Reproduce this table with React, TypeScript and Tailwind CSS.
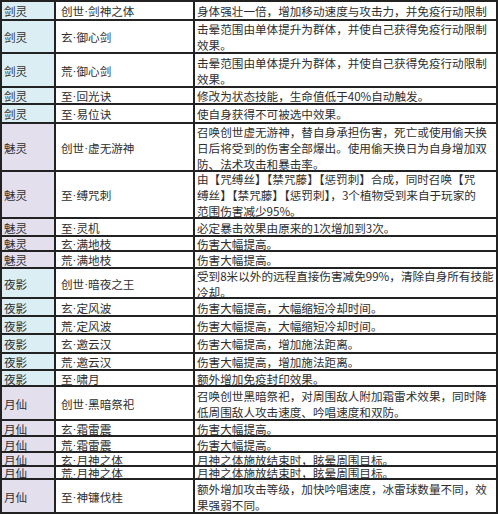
type Row = {
  role: string;
  skill: string;
  lines: string[];
  h: string;
};

const rows: Row[] = [
  { role: "剑灵", skill: "创世·剑神之体", lines: ["身体强壮一倍，增加移动速度与攻击力，并免疫行动限制"], h: "h-[19px]" },
  { role: "剑灵", skill: "玄·御心剑", lines: ["击晕范围由单体提升为群体，并使自己获得免疫行动限制", "效果。"], h: "h-[33px]" },
  { role: "剑灵", skill: "荒·御心剑", lines: ["击晕范围由单体提升为群体，并使自己获得免疫行动限制", "效果。"], h: "h-[34px]" },
  { role: "剑灵", skill: "至·回光诀", lines: ["修改为状态技能，生命值低于40%自动触发。"], h: "h-[17px]" },
  { role: "剑灵", skill: "至·易位诀", lines: ["使自身获得不可被选中效果。"], h: "h-[19px]" },
  {
    role: "魅灵",
    skill: "创世·虚无游神",
    lines: [
      "召唤创世虚无游神，替自身承担伤害，死亡或使用偷天换",
      "日后将受到的伤害全部爆出。使用偷天换日为自身增加双",
      "防、法术攻击和暴击率。",
    ],
    h: "h-[48px]",
  },
  {
    role: "魅灵",
    skill: "至·缚咒刺",
    lines: [
      "由【咒缚丝】【禁咒藤】【惩罚刺】合成，同时召唤【咒",
      "缚丝】【禁咒藤】【惩罚刺】，3个植物受到来自于玩家的",
      "范围伤害减少95%。",
    ],
    h: "h-[47px]",
  },
  { role: "魅灵", skill: "至·灵机", lines: ["必定暴击效果由原来的1次增加到3次。"], h: "h-[18px]" },
  { role: "魅灵", skill: "玄·满地枝", lines: ["伤害大幅提高。"], h: "h-[15px]" },
  { role: "魅灵", skill: "荒·满地枝", lines: ["伤害大幅提高。"], h: "h-[17px]" },
  {
    role: "夜影",
    skill: "创世·暗夜之王",
    lines: ["受到8米以外的远程直接伤害减免99%，清除自身所有技能", "冷却。"],
    h: "h-[30px]",
  },
  { role: "夜影", skill: "玄·定风波", lines: ["伤害大幅提高，大幅缩短冷却时间。"], h: "h-[18px]" },
  { role: "夜影", skill: "荒·定风波", lines: ["伤害大幅提高，大幅缩短冷却时间。"], h: "h-[18px]" },
  { role: "夜影", skill: "玄·邀云汉", lines: ["伤害大幅提高，增加施法距离。"], h: "h-[19px]" },
  { role: "夜影", skill: "荒·邀云汉", lines: ["伤害大幅提高，增加施法距离。"], h: "h-[17px]" },
  { role: "夜影", skill: "至·啸月", lines: ["额外增加免疫封印效果。"], h: "h-[16px]" },
  {
    role: "月仙",
    skill: "创世·黑暗祭祀",
    lines: ["召唤创世黑暗祭祀，对周围敌人附加霜雷术效果，同时降", "低周围敌人攻击速度、吟唱速度和双防。"],
    h: "h-[34px]",
  },
  { role: "月仙", skill: "玄·霜雷震", lines: ["伤害大幅提高。"], h: "h-[16px]" },
  { role: "月仙", skill: "荒·霜雷震", lines: ["伤害大幅提高。"], h: "h-[16px]" },
  { role: "月仙", skill: "玄·月神之体", lines: ["月神之体施放结束时，眩晕周围目标。"], h: "h-[14px] leading-[12px]" },
  { role: "月仙", skill: "荒·月神之体", lines: ["月神之体施放结束时，眩晕周围目标。"], h: "h-[13px] leading-[11px]" },
  {
    role: "月仙",
    skill: "至·神镰伐桂",
    lines: ["额外增加攻击等级，加快吟唱速度，冰雷球数量不同，效", "果强弱不同。"],
    h: "h-[34px]",
  },
];

// 剑灵 / 夜影 get the blue tint, 魅灵 / 月仙 the lavender one
const roleBg = (role: string) =>
  role === "剑灵" || role === "夜影" ? "bg-[#daeef3]" : "bg-[#e4dfec]";

// the CJK font draws "·" full width; the sheet shows a narrow dot
const SkillName = ({ name }: { name: string }) => {
  const [head, tail] = name.split("·");
  return (
    <>
      {head}
      <span style={{ fontFamily: '"Liberation Sans", sans-serif' }}>·</span>
      {tail}
    </>
  );
};

const App = () => {
  return (
    <div className="w-[500px] h-[514px] bg-white overflow-hidden">
      <div
        className="w-[498px] border-x-2 border-b-2 border-[#222] text-[#2e2e2e] text-[11.6px] leading-[16px]"
        style={{ fontFamily: '"Noto Sans CJK SC", "Noto Sans", sans-serif' }}
      >
        {rows.map((row, i) => (
          <div key={i} className={`flex border-t-2 border-[#222] overflow-hidden ${row.h}`}>
            <div className={`w-[54px] shrink-0 border-r-2 border-[#222] pl-[2px] pt-[1px] flex items-center ${roleBg(row.role)}`}>
              {row.role}
            </div>
            <div className="w-[139px] shrink-0 border-r-2 border-[#222] pl-[5px] pt-[1px] flex items-center whitespace-nowrap">
              <SkillName name={row.skill} />
            </div>
            <div className="flex-1 pl-[2px] pt-[1px] flex flex-col justify-center overflow-hidden">
              {row.lines.map((line, j) => (
                <div key={j} className="whitespace-nowrap">
                  {line}
                </div>
              ))}
            </div>
          </div>
        ))}
      </div>
    </div>
  );
};

export default App;
